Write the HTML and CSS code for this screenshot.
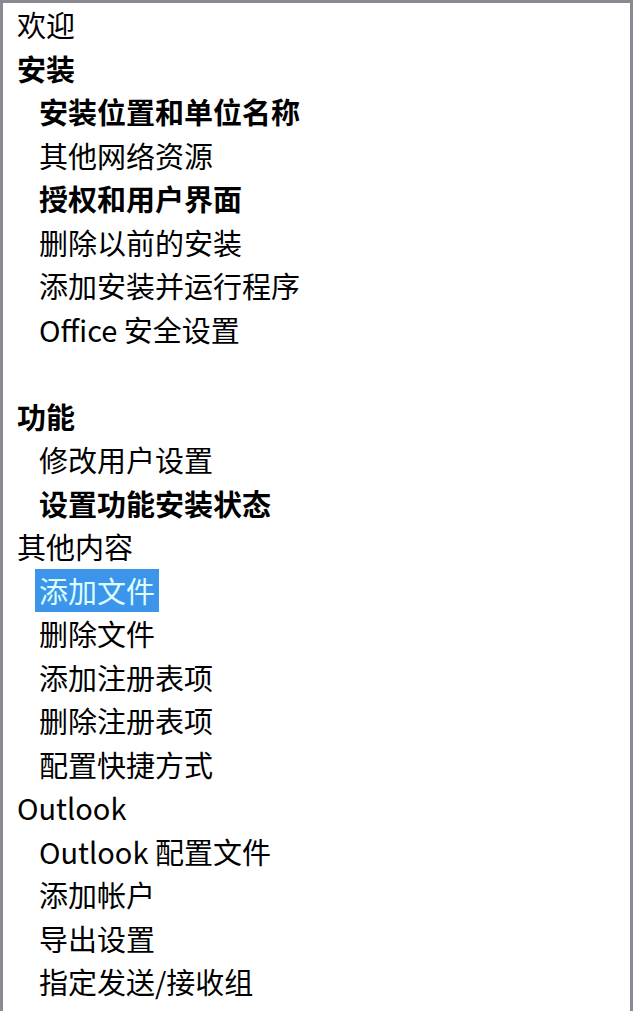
FILE: index.html
```html
<!DOCTYPE html>
<html lang="zh-CN">
<head>
    <meta charset="UTF-8">
    <meta name="viewport" content="width=device-width, initial-scale=1.0">
    <title>Office 自定义工具</title>
    <link rel="stylesheet" href="styles.css">
</head>
<body>

    <nav class="tree-panel">
        <ul class="tree">
            <li class="node level-0"><span class="label">欢迎</span></li>
            <li class="node level-0 bold"><span class="label">安装</span></li>
            <li class="node level-1 bold"><span class="label">安装位置和单位名称</span></li>
            <li class="node level-1"><span class="label">其他网络资源</span></li>
            <li class="node level-1 bold"><span class="label">授权和用户界面</span></li>
            <li class="node level-1"><span class="label">删除以前的安装</span></li>
            <li class="node level-1"><span class="label">添加安装并运行程序</span></li>
            <li class="node level-1"><span class="label">Office 安全设置</span></li>
            <li class="node spacer"></li>
            <li class="node level-0 bold"><span class="label">功能</span></li>
            <li class="node level-1"><span class="label">修改用户设置</span></li>
            <li class="node level-1 bold"><span class="label">设置功能安装状态</span></li>
            <li class="node level-0"><span class="label">其他内容</span></li>
            <li class="node level-1 selected"><span class="label">添加文件</span></li>
            <li class="node level-1"><span class="label">删除文件</span></li>
            <li class="node level-1"><span class="label">添加注册表项</span></li>
            <li class="node level-1"><span class="label">删除注册表项</span></li>
            <li class="node level-1"><span class="label">配置快捷方式</span></li>
            <li class="node level-0"><span class="label">Outlook</span></li>
            <li class="node level-1"><span class="label">Outlook 配置文件</span></li>
            <li class="node level-1"><span class="label">添加帐户</span></li>
            <li class="node level-1"><span class="label">导出设置</span></li>
            <li class="node level-1"><span class="label">指定发送/接收组</span></li>
        </ul>
    </nav>

    <script>
        // Clicking a node moves the selection highlight to it
        var nodes = document.querySelectorAll(".node .label");
        nodes.forEach(function(label) {
            label.addEventListener("click", function() {
                var current = document.querySelector(".node.selected");
                if (current) {
                    current.classList.remove("selected");
                }
                label.parentNode.classList.add("selected");
            });
        });
    </script>

</body>
</html>
```

FILE: styles.css
```css
html, body {
    margin: 0;
    padding: 0;
    background-color: #fff;
}
body {
    font-family: "Noto Sans CJK SC", "Noto Sans", sans-serif;
    font-size: 29px;
    color: #000;
}
.tree-panel {
    box-sizing: border-box;
    min-height: 100vh;
    border: 3px solid #8b8a92;
    border-bottom: none;
    background-color: #fff;
}
.tree {
    list-style: none;
    margin: 0;
    padding: 0;
}
.node {
    height: 43.5px;
    line-height: 43.5px;
    white-space: nowrap;
}
.node .label {
    display: inline-block;
    height: 100%;
    padding: 0 4px;
    cursor: default;
}
.level-0 {
    padding-left: 10px;
}
.level-1 {
    padding-left: 32px;
}
.bold .label {
    font-weight: bold;
}
.selected .label {
    background-color: #3c95ea;
    color: #dcffff;
}
```
